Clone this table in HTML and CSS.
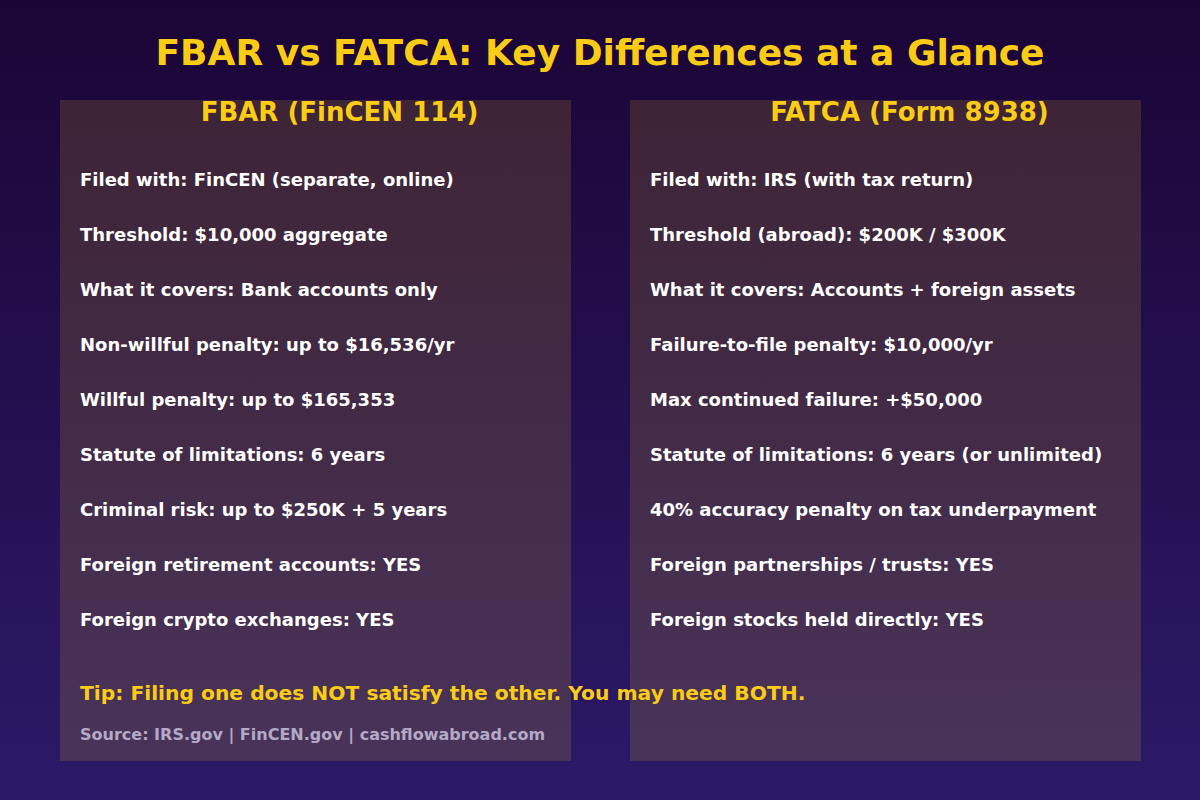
FILE: index.html
```html
<!DOCTYPE html>
<html>
<head>
<meta charset="utf-8">
<link rel="stylesheet" href="styles.css">
</head>
<body>
<main class="page">
  <h1 class="title">FBAR vs FATCA: Key Differences at a Glance</h1>
  <section class="stage">
    <div class="panel panel-left">
      <h2 class="panel-head">FBAR (FinCEN 114)</h2>
      <ul class="items">
        <li>Filed with: FinCEN (separate, online)</li>
        <li>Threshold: $10,000 aggregate</li>
        <li>What it covers: Bank accounts only</li>
        <li>Non-willful penalty: up to $16,536/yr</li>
        <li>Willful penalty: up to $165,353</li>
        <li>Statute of limitations: 6 years</li>
        <li>Criminal risk: up to $250K + 5 years</li>
        <li>Foreign retirement accounts: YES</li>
        <li>Foreign crypto exchanges: YES</li>
      </ul>
    </div>
    <div class="panel panel-right">
      <h2 class="panel-head">FATCA (Form 8938)</h2>
      <ul class="items">
        <li>Filed with: IRS (with tax return)</li>
        <li>Threshold (abroad): $200K / $300K</li>
        <li>What it covers: Accounts + foreign assets</li>
        <li>Failure-to-file penalty: $10,000/yr</li>
        <li>Max continued failure: +$50,000</li>
        <li>Statute of limitations: 6 years (or unlimited)</li>
        <li>40% accuracy penalty on tax underpayment</li>
        <li>Foreign partnerships / trusts: YES</li>
        <li>Foreign stocks held directly: YES</li>
      </ul>
    </div>
    <p class="tip">Tip: Filing one does NOT satisfy the other. You may need BOTH.</p>
    <p class="source">Source: IRS.gov | FinCEN.gov | cashflowabroad.com</p>
  </section>
</main>
</body>
</html>
```

FILE: styles.css
```css
* { box-sizing: border-box; }
html, body { margin: 0; padding: 0; }
body {
  width: 1200px;
  height: 800px;
  overflow: hidden;
  background: linear-gradient(180deg, #1b0536 0%, #2c1a68 100%);
  font-family: "DejaVu Sans", sans-serif;
  font-weight: bold;
}
.page {
  display: flex;
  flex-direction: column;
  padding-top: 30px;
}
.title {
  margin: 0;
  height: 70px;
  line-height: 46px;
  text-align: center;
  font-size: 36px;
  color: #facc15;
}
.stage {
  display: grid;
  grid-template-columns: 511px 511px;
  grid-template-rows: 1fr 26px 40px;
  column-gap: 59px;
  margin-left: 60px;
  height: 661px;
  padding-bottom: 16px;
}
.panel {
  grid-row: 1 / -1;
  margin-bottom: -16px;
  background: rgba(250, 204, 21, 0.15);
  padding: 0 20px;
}
.panel-left { grid-column: 1; }
.panel-right { grid-column: 2; }
.panel-head {
  margin: 0;
  padding-left: 48px;
  line-height: 24px;
  text-align: center;
  font-size: 26px;
  color: #facc15;
}
.items {
  list-style: none;
  margin: 28px 0 0;
  padding: 0;
}
.items li {
  height: 55px;
  line-height: 55px;
  font-size: 18px;
  color: #ffffff;
  white-space: nowrap;
}
.tip {
  grid-row: 2;
  grid-column: 1 / -1;
  margin: 0;
  padding-left: 20px;
  padding-top: 1px;
  line-height: 26px;
  font-size: 20.25px;
  color: #facc15;
  white-space: nowrap;
  position: relative;
}
.source {
  grid-row: 3;
  grid-column: 1 / -1;
  margin: 20px 0 0;
  padding-left: 20px;
  line-height: 20px;
  font-size: 16px;
  color: #b4a9c6;
  position: relative;
}
```
